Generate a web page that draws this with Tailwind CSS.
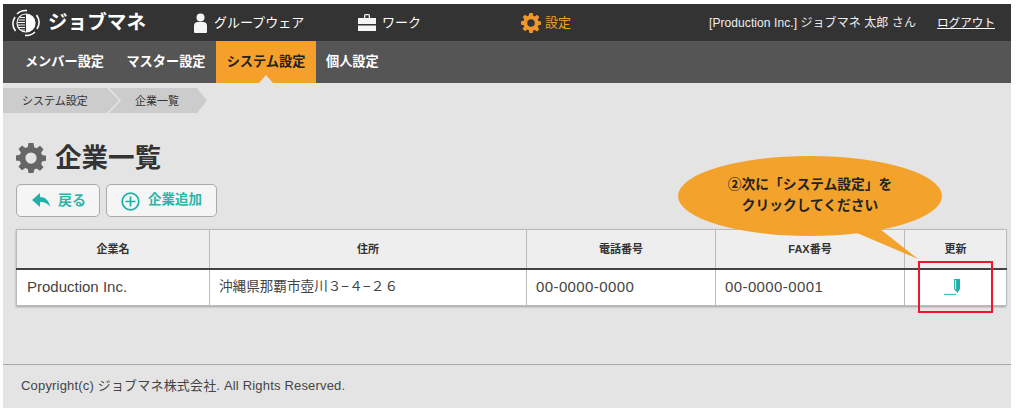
<!DOCTYPE html>
<html lang="ja">
<head>
  <meta charset="UTF-8">
  <title>企業一覧</title>
  <script src="https://cdn.jsdelivr.net/npm/@tailwindcss/browser@4"></script>
</head>
<body class="bg-white overflow-hidden font-['Liberation_Sans','Noto_Sans_CJK_JP',sans-serif]">
  <div class="relative w-[1016px] h-[415px] pt-[4px] pl-[3px] pr-[5px]">
    <div class="relative w-[1008px] h-[404px] bg-[#e4e4e4] flex flex-col">

      <!-- top bar -->
      <header class="h-[37px] bg-[#333333] flex items-center text-white shrink-0">
        <svg class="ml-[8px] w-[30px] h-[30px] shrink-0" viewBox="0 0 30 30" fill="none">
          <path d="M6 6a12.500 12.500 0 0 1 10-3.400M24 24a12.500 12.500 0 0 1-10 3.400M4.500 23A12.500 12.500 0 0 1 4 9M25.500 7A12.500 12.500 0 0 1 26 21" stroke="#fff" stroke-width="1.600"/>
          <circle cx="15" cy="15" r="9" stroke="#fff" stroke-width="1.200"/>
          <path d="M15 6a9 9 0 0 1 0 18z" fill="#fff"/>
          <path d="M9 9.500h5M7.500 12h6.500M7 14.500h7M7 17h7M8 19.500h6M9.500 22h4.500" stroke="#fff" stroke-width="1"/>
        </svg>
        <span class="ml-[7px] w-[105px] text-[19.5px] font-bold tracking-[0.1px] leading-none whitespace-nowrap">ジョブマネ</span>
        <div class="ml-[40px] w-[165px] flex items-center gap-[6px]">
          <svg class="w-[15px] h-[20px]" viewBox="0 0 15 20" fill="#f5f5f5"><circle cx="7.500" cy="4.500" r="4"/><path d="M1 19v-6a4 4 0 0 1 4-4h5a4 4 0 0 1 4 4v6a1 1 0 0 1-1 1H2a1 1 0 0 1-1-1z"/></svg>
          <span class="text-[13px] whitespace-nowrap">グループウェア</span>
        </div>
        <div class="w-[163px] flex items-center gap-[6px]">
          <svg class="w-[18px] h-[19px]" viewBox="0 0 18 19" fill="#f5f5f5"><path d="M6 5V2.500A1.500 1.500 0 0 1 7.500 1h3A1.500 1.500 0 0 1 12 2.500V5h-1.300V2.300H7.300V5z"/><path d="M0 5h18v6H0zM0 12.500h18V18H0z"/></svg>
          <span class="text-[13px] whitespace-nowrap">ワーク</span>
        </div>
        <div class="flex items-center gap-[4px] text-[#f0a024]">
          <svg class="w-[20px] h-[20px]" viewBox="0 0 24 24" fill="#f0962a"><path fill-rule="evenodd" d="M10 0h4l.6 3.300 1.900.8 2.700-1.900 2.800 2.800-1.900 2.700.8 1.900 3.100.6v4l-3.100.6-.8 1.900 1.900 2.700-2.800 2.800-2.700-1.900-1.900.8L14 24h-4l-.6-3.300-1.900-.8-2.700 1.900-2.800-2.800 1.900-2.700-.8-1.900L0 14v-4l3.100-.6.8-1.900L2 4.800 4.800 2l2.700 1.900 1.900-.8zM12 7.500a4.500 4.500 0 1 0 0 9 4.500 4.500 0 0 0 0-9z"/></svg>
          <span class="text-[13px]">設定</span>
        </div>
        <span class="ml-auto text-[12px] tracking-[0.08px] text-[#eeeeee] whitespace-nowrap">[Production Inc.] ジョブマネ 太郎 さん</span>
        <a class="ml-[21px] mr-[16px] text-[11.6px] underline whitespace-nowrap">ログアウト</a>
      </header>

      <!-- sub nav -->
      <nav class="h-[42px] bg-[#555555] flex items-stretch pl-[10px] text-white text-[13.2px] font-bold shrink-0">
        <a class="w-[103px] flex items-center justify-center whitespace-nowrap">メンバー設定</a>
        <a class="w-[100px] flex items-center justify-center whitespace-nowrap">マスター設定</a>
        <a class="relative w-[100px] flex items-center justify-center bg-[#f5a02a] text-[#222222] whitespace-nowrap">
          システム設定
          <span class="absolute bottom-0 left-1/2 -translate-x-1/2 w-0 h-0 border-x-[7px] border-x-transparent border-b-[8px] border-b-[#e4e4e4]"></span>
        </a>
        <a class="ml-[10px] flex items-center whitespace-nowrap">個人設定</a>
      </nav>

      <!-- breadcrumb -->
      <div class="mt-[5px] h-[25px] w-[204px] bg-[#cccccc] flex items-center text-[11px] text-[#333333] shrink-0 [clip-path:polygon(0_0,194px_0,204px_50%,194px_100%,0_100%)]">
        <span class="ml-[19px] w-[84px] pt-[1px] whitespace-nowrap">システム設定</span>
        <svg class="w-[16px] h-[25px] shrink-0" viewBox="0 0 16 25" fill="none"><path d="M2 0l12 12.500L2 25" stroke="#e4e4e4" stroke-width="1.500"/></svg>
        <span class="ml-[13px] pt-[1px] whitespace-nowrap">企業一覧</span>
      </div>

      <!-- title -->
      <div class="mt-[28px] ml-[13px] flex items-center gap-[9px] h-[34px] shrink-0">
        <svg class="w-[30px] h-[30px]" viewBox="0 0 24 24" fill="#666666"><path fill-rule="evenodd" d="M10 0h4l.6 3.300 1.900.8 2.700-1.900 2.800 2.800-1.900 2.700.8 1.900 3.100.6v4l-3.100.6-.8 1.900 1.900 2.700-2.800 2.800-2.700-1.900-1.900.8L14 24h-4l-.6-3.300-1.900-.8-2.700 1.900-2.800-2.800 1.900-2.700-.8-1.900L0 14v-4l3.100-.6.8-1.900L2 4.800 4.800 2l2.700 1.900 1.900-.8zM12 7.500a4.500 4.500 0 1 0 0 9 4.500 4.500 0 0 0 0-9z"/></svg>
        <h1 class="text-[26.5px] font-bold text-[#333333] leading-none">企業一覧</h1>
      </div>

      <!-- buttons -->
      <div class="mt-[9px] ml-[13px] flex gap-[6px] shrink-0">
        <button class="w-[84px] h-[33px] bg-[#f5f5f5] border border-[#aaaaaa] rounded-[5px] flex items-center text-[14px] font-bold text-[#2fb3a8]">
          <svg class="ml-[15px] w-[18px] h-[15px]" viewBox="0 0 18 15" fill="#1fb0a8"><path d="M8 0v4c5 0 9 3 10 10-2-3.500-5-5-10-5v5L0 7z"/></svg>
          <span class="ml-[8px]">戻る</span>
        </button>
        <button class="w-[111px] h-[33px] bg-[#f5f5f5] border border-[#aaaaaa] rounded-[5px] flex items-center text-[13.500px] font-bold text-[#2fb3a8]">
          <svg class="ml-[14px] w-[19px] h-[19px] mt-[2px]" viewBox="0 0 19 19" fill="none" stroke="#1fb0a8" stroke-width="1.700"><circle cx="9.500" cy="9.500" r="8.300"/><path d="M9.500 4.500v10M4.500 9.500h10"/></svg>
          <span class="ml-[8px]">企業追加</span>
        </button>
      </div>

      <!-- table -->
      <div class="mt-[12px] ml-[13px] w-[990px] shrink-0 shadow-[0_1px_2px_rgba(0,0,0,0.3)]">
        <table class="w-full table-fixed border-collapse">
          <colgroup>
            <col class="w-[193px]"><col class="w-[317px]"><col class="w-[189px]"><col class="w-[189px]"><col class="w-[102px]">
          </colgroup>
          <thead>
            <tr class="h-[39px] bg-[#eeeeee] text-[11px] font-bold text-[#333333]">
              <th class="border border-[#bbbbbb] border-b-2 border-b-[#444444]">企業名</th>
              <th class="border border-[#bbbbbb] border-b-2 border-b-[#444444]">住所</th>
              <th class="border border-[#bbbbbb] border-b-2 border-b-[#444444]">電話番号</th>
              <th class="border border-[#bbbbbb] border-b-2 border-b-[#444444]">FAX番号</th>
              <th class="border border-[#bbbbbb] border-b-2 border-b-[#444444]">更新</th>
            </tr>
          </thead>
          <tbody>
            <tr class="h-[37px] bg-white text-[15px] text-[#444444]">
              <td class="border border-[#bbbbbb] pl-[10px] whitespace-nowrap">Production Inc.</td>
              <td class="border border-[#bbbbbb] pl-[9px] text-[13.600px] whitespace-nowrap">沖縄県那覇市壺川３−４−２６</td>
              <td class="border border-[#bbbbbb] pl-[9px] tracking-[0.4px]">00-0000-0000</td>
              <td class="border border-[#bbbbbb] pl-[9px] tracking-[0.4px]">00-0000-0001</td>
              <td class="border border-[#bbbbbb]">
                <svg class="ml-[39px] w-[17px] h-[18px]" viewBox="0 0 17 18" fill="none"><path d="M0 16.500h12" stroke="#35c0c0" stroke-width="1.200"/><path d="M10 1h6v10l-2.500 4-3.500-4z" fill="#1fb0a8"/><path d="M11.500 2v9" stroke="#d8f2f0" stroke-width="1.200"/></svg>
              </td>
            </tr>
          </tbody>
        </table>
      </div>

      <!-- footer -->
      <footer class="mt-auto h-[44px] border-t border-[#aaaaaa] flex items-center pl-[18px] pb-[1px] text-[13px] tracking-[0.18px] text-[#444444] shrink-0">
        Copyright(c) ジョブマネ株式会社. All Rights Reserved.
      </footer>
    </div>

    <!-- callout overlay -->
    <div class="absolute left-[678px] top-[156px] w-[264px] h-[80px] rounded-[50%] bg-[#f3a22c] flex flex-col items-center justify-center text-[13.750px] font-bold text-[#222222] leading-[21px] pb-[2px]">
      <span>②次に「システム設定」を</span>
      <span>クリックしてください</span>
    </div>
    <svg class="absolute left-[850px] top-[225px] w-[75px] h-[40px]" viewBox="0 0 75 40"><path d="M7 8 L68 34 L30 4 L7 0z" fill="#f3a22c"/></svg>
    <div class="absolute left-[918px] top-[261px] w-[75px] h-[52px] border-2 border-[#f0142c]"></div>
  </div>
</body>
</html>
